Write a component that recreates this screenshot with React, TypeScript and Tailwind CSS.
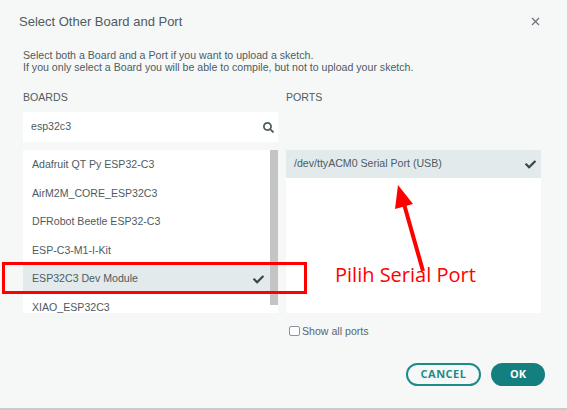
import { FaCheck, FaSearch } from "react-icons/fa";

const boards = [
  "Adafruit QT Py ESP32-C3",
  "AirM2M_CORE_ESP32C3",
  "DFRobot Beetle ESP32-C3",
  "ESP-C3-M1-I-Kit",
  "ESP32C3 Dev Module",
  "XIAO_ESP32C3",
];

export default function App() {
  return (
    <div className="relative w-[567px] h-[410px] overflow-hidden bg-[#f6f8f8] text-[#4e5b61] font-['Liberation_Sans',Arial,sans-serif] border-b-2 border-[#c8cbcb]">
      {/* header */}
      <div className="flex items-center justify-between pl-[19px] pr-[27px] pt-[13px] h-[30px]">
        <span className="text-[13px] leading-[16px]">Select Other Board and Port</span>
        <svg width="9" height="9" viewBox="0 0 9 9" className="text-[#6b777c]">
          <path d="M1 1L8 8M8 1L1 8" stroke="currentColor" strokeWidth="1.3" />
        </svg>
      </div>

      <div className="px-[23px]">
        <p className="mt-[19px] text-[10.6px] leading-[12px]">
          Select both a Board and a Port if you want to upload a sketch.
          <br />
          If you only select a Board you will be able to compile, but not to upload your sketch.
        </p>

        <div className="grid grid-cols-[255px_255px] gap-x-[8px] mt-[18px]">
          {/* boards */}
          <div>
            <div className="text-[10.6px] leading-[13px] h-[13px]">BOARDS</div>
            <div className="mt-[8px] h-[30px] bg-white flex items-center justify-between pl-[8px] pr-[4px] text-[10.6px]">
              <span>esp32c3</span>
              <FaSearch className="w-[11px] h-[11px] text-[#4e5b61]" />
            </div>
            <div className="mt-[8px] h-[163px] bg-white flex overflow-hidden">
              <div className="flex-1 pt-[1px]">
                {boards.map((b, i) => (
                  <div
                    key={b}
                    className={
                      "h-[28.5px] flex items-center justify-between pl-[9px] pr-[6px] text-[10.6px] " +
                      (i === 4 ? "bg-[#e3eaeb]" : "")
                    }
                  >
                    <span>{b}</span>
                    {i === 4 && <FaCheck className="w-[11px] h-[11px] text-[#3b4548]" />}
                  </div>
                ))}
              </div>
              <div className="w-[8px] h-[155px] bg-[#c4c4c4]" />
            </div>
          </div>

          {/* ports */}
          <div>
            <div className="text-[10.6px] leading-[13px] h-[13px]">PORTS</div>
            <div className="mt-[46px] h-[163px] bg-white">
              <div className="h-[28px] flex items-center justify-between pl-[8px] pr-[5px] bg-[#e3eaeb] text-[10.6px]">
                <span>/dev/ttyACM0 Serial Port (USB)</span>
                <FaCheck className="w-[11px] h-[11px] text-[#3b4548]" />
              </div>
            </div>
            <label className="mt-[12px] flex items-center text-[10.6px] leading-[12px] pl-[3px]">
              <span className="w-[11px] h-[10px] border border-[#8a9499] rounded-[2px] bg-white mr-[2px]" />
              <span className="text-[#5a666b]">Show all ports</span>
            </label>
          </div>
        </div>

        <div className="flex justify-end gap-[10px] mt-[26px] mr-[-1px]">
          <button className="w-[75px] h-[23px] rounded-full border-2 border-[#1f8a8a] text-[#1f8a8a] text-[11px] font-bold tracking-[0.5px] font-['Open_Sans',sans-serif] flex items-center justify-center">
            CANCEL
          </button>
          <button className="w-[54px] h-[23px] rounded-full bg-[#137f7f] text-white text-[11px] font-bold font-['Open_Sans',sans-serif] flex items-center justify-center">
            OK
          </button>
        </div>
      </div>

      {/* annotation overlay */}
      <div className="absolute left-[2px] top-[262px] w-[305px] h-[32px] border-[3px] border-[#ff0000]" />
      <svg className="absolute left-0 top-0" width="567" height="410">
        <line x1="423" y1="271" x2="404" y2="204" stroke="#ff0000" strokeWidth="4" />
        <polygon points="398,185 395,209 413,204" fill="#ff0000" />
      </svg>
      <div className="absolute left-[335px] top-[262px] text-[20px] leading-[26px] text-[#ff0000] font-['Open_Sans',sans-serif]">
        Pilih Serial Port
      </div>
    </div>
  );
}
